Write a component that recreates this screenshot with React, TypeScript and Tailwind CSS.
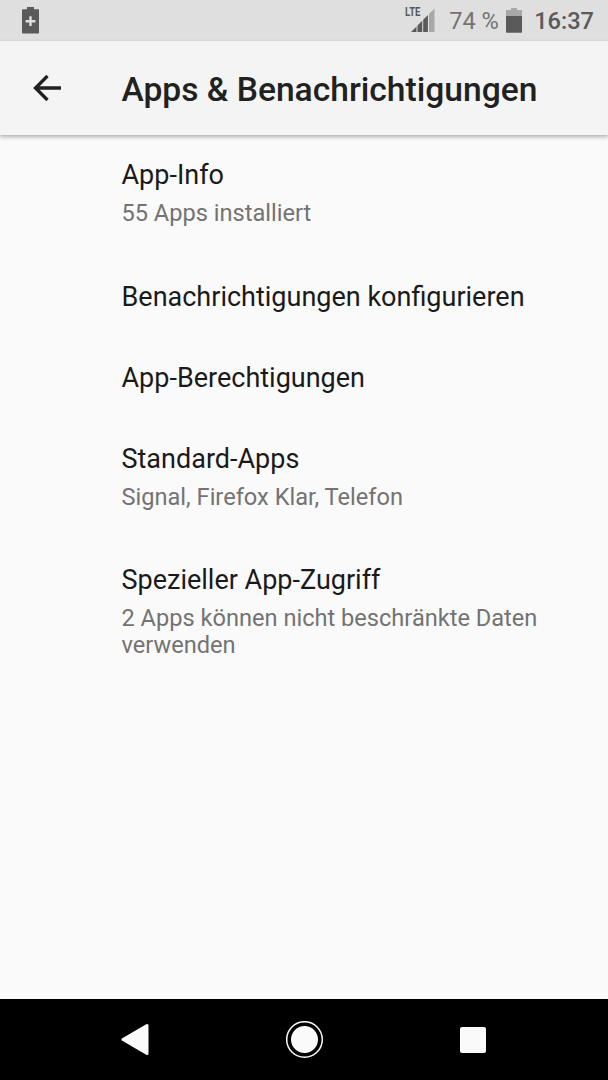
import React from 'react';

interface SettingsEntry {
  title: string;
  summary?: string;
}

const entries: SettingsEntry[] = [
  { title: 'App-Info', summary: '55 Apps installiert' },
  { title: 'Benachrichtigungen konfigurieren' },
  { title: 'App-Berechtigungen' },
  { title: 'Standard-Apps', summary: 'Signal, Firefox Klar, Telefon' },
  { title: 'Spezieller App-Zugriff', summary: '2 Apps können nicht beschränkte Daten verwenden' },
];

const StatusBar: React.FC = () => (
  <div className="flex h-[40.5px] shrink-0 items-center bg-[#dfdfdf] pl-[22px] pr-[14px] text-[23.6px] leading-none text-[#5a5a5a]">
    <svg width="17" height="27" viewBox="0 0 17 27" aria-label="Energiesparmodus">
      <path d="M5 0h7v2.300h4.200a.8.8 0 0 1 .8.800v22.600a.8.8 0 0 1-.8.800H.8a.8.8 0 0 1-.8-.800V3.100a.8.8 0 0 1 .8-.800H5z" fill="#5a5a5a" />
      <path d="M7.300 9.300h2.400v3.700h3.700v2.400H9.700v3.700H7.300v-3.700H3.600v-2.400h3.700z" fill="#dfdfdf" />
    </svg>
    <svg className="ml-auto overflow-visible" width="30" height="28" viewBox="0 0 30 28" aria-label="LTE">
      <text x="0" y="9.500" fontSize="12.500" fontWeight="700" fill="#5a5a5a" textLength="15.500" lengthAdjust="spacingAndGlyphs">
        LTE
      </text>
      <path d="M6 26 11.500 20.500V26zM12.500 19.500 17.200 14.800V26h-4.700zM18.200 13.800 22.900 9.100V26h-4.700z" fill="#5a5a5a" />
      <path d="M24 8 29.500 2.500V26H24z" fill="#a8a8a8" />
    </svg>
    <span className="ml-[14px] w-[50px] pt-[4px] whitespace-nowrap text-[#737373]">74 %</span>
    <svg className="ml-[7px]" width="16" height="26" viewBox="0 0 16 26" aria-label="Akku">
      <path d="M5 1h6v2h5v6H0V3h5z" fill="#a8a8a8" />
      <path d="M0 9h16v16a.8.8 0 0 1-.8.800H.8a.8.8 0 0 1-.8-.800z" fill="#5a5a5a" />
    </svg>
    <span className="ml-[12px] pt-[4px] font-medium">16:37</span>
  </div>
);

const AppBar: React.FC = () => (
  <header className="z-10 flex h-[94.5px] shrink-0 items-center bg-[#f4f4f4] pl-[33px] shadow-[0_2px_4px_rgba(0,0,0,0.3)]">
    <button className="w-[88.5px]" aria-label="Zurück">
      <svg width="28" height="28" viewBox="0 0 28 28" fill="none" stroke="#212121" strokeWidth="3.300">
        <path d="M28 14H4M14.500 2 2.500 14l12 12" />
      </svg>
    </button>
    <h1 className="pt-[5px] text-[33.6px] leading-none font-medium text-[#212121]">Apps &amp; Benachrichtigungen</h1>
  </header>
);

const SettingsItem: React.FC<SettingsEntry> = ({ title, summary }) => (
  <li className={summary ? 'min-h-[121.5px] pt-[24px] pb-[20px]' : 'flex h-[81px] items-center'}>
    <div className="text-[27px] leading-[32px] text-[#1a1a1a]">{title}</div>
    {summary && <div className="mt-[9px] text-[23.6px] leading-[27.4px] text-[#737373]">{summary}</div>}
  </li>
);

const NavigationBar: React.FC = () => (
  <nav className="flex h-[81px] shrink-0 items-center justify-between bg-black pr-[122px] pl-[121px]">
    <svg width="28" height="34" viewBox="0 0 28 34" aria-label="Zurück">
      <path d="M26 2.500v28L2 16.500z" fill="#fafafa" stroke="#fafafa" strokeWidth="3" strokeLinejoin="round" />
    </svg>
    <svg width="38" height="38" viewBox="0 0 38 38" aria-label="Startbildschirm">
      <circle cx="18.500" cy="18.500" r="17.800" fill="none" stroke="#fafafa" strokeWidth="1.500" />
      <circle cx="18.500" cy="18.500" r="13.500" fill="#fafafa" />
    </svg>
    <svg width="26" height="26" viewBox="0 0 26 26" aria-label="Übersicht">
      <rect width="26" height="26" rx="2" fill="#fafafa" />
    </svg>
  </nav>
);

const App: React.FC = () => (
  <div className="flex h-[1080px] w-[608px] flex-col overflow-hidden bg-[#fafafa] font-['Roboto',sans-serif]">
    <StatusBar />
    <AppBar />
    <main className="flex-1">
      <ul className="pr-[27px] pl-[121.5px]">
        {entries.map((entry) => (
          <SettingsItem key={entry.title} {...entry} />
        ))}
      </ul>
    </main>
    <NavigationBar />
  </div>
);

export default App;
